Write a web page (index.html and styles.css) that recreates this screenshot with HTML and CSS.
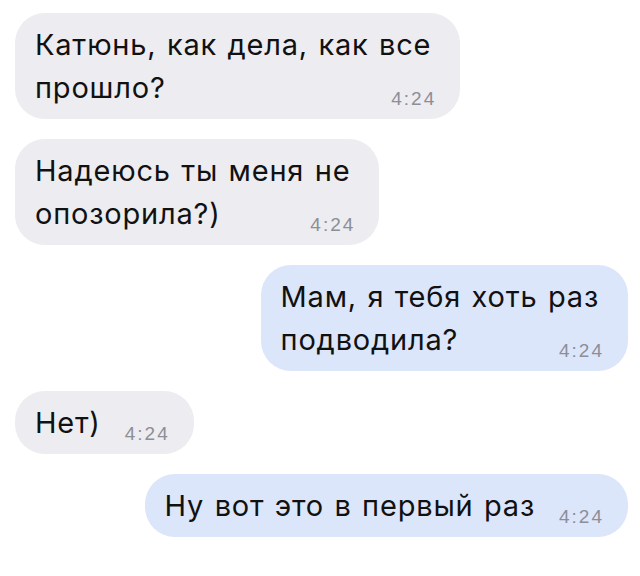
FILE: index.html
```html
<!DOCTYPE html>
<html lang="ru">
<head>
    <meta charset="UTF-8">
    <meta name="viewport" content="width=device-width, initial-scale=1.0">
    <title>Чат</title>
    <link rel="stylesheet" href="styles.css">
</head>
<body>
    <main class="chat">
        <div class="msg in wrap">
            <p class="text">Катюнь, как дела, как все<br>прошло?</p>
            <span class="time">4:24</span>
        </div>
        <div class="msg in wrap">
            <p class="text">Надеюсь ты меня не<br>опозорила?)</p>
            <span class="time">4:24</span>
        </div>
        <div class="msg out wrap">
            <p class="text">Мам, я тебя хоть раз<br>подводила?</p>
            <span class="time">4:24</span>
        </div>
        <div class="msg in">
            <p class="text">Нет)</p>
            <span class="time">4:24</span>
        </div>
        <div class="msg out">
            <p class="text">Ну вот это в первый раз</p>
            <span class="time">4:24</span>
        </div>
    </main>
</body>
</html>
```

FILE: styles.css
```css
body {
    margin: 0;
    background-color: #fff;
    font-family: 'Inter', 'Liberation Sans', Arial, sans-serif;
    color: #111;
}
.chat {
    display: flex;
    flex-direction: column;
    gap: 20px;
    padding: 13px 12px 0 15px;
}
.msg {
    display: flex;
    align-items: flex-end;
    padding: 10px 24px 10px 20px;
    border-radius: 30px;
}
.msg.in {
    align-self: flex-start;
    background-color: #ececf1;
}
.msg.out {
    align-self: flex-end;
    background-color: #dce6fa;
}
.text {
    margin: 0;
    font-size: 29px;
    line-height: 43px;
    letter-spacing: 0.8px;
    word-spacing: 1.5px;
}
.time {
    margin: 0 0 0 24px;
    font-family: 'Liberation Sans', Arial, sans-serif;
    font-size: 19px;
    line-height: 20px;
    letter-spacing: 2px;
    color: #8e8e96;
    white-space: nowrap;
}
.msg.wrap .time {
    margin-left: -40px;
}
```
